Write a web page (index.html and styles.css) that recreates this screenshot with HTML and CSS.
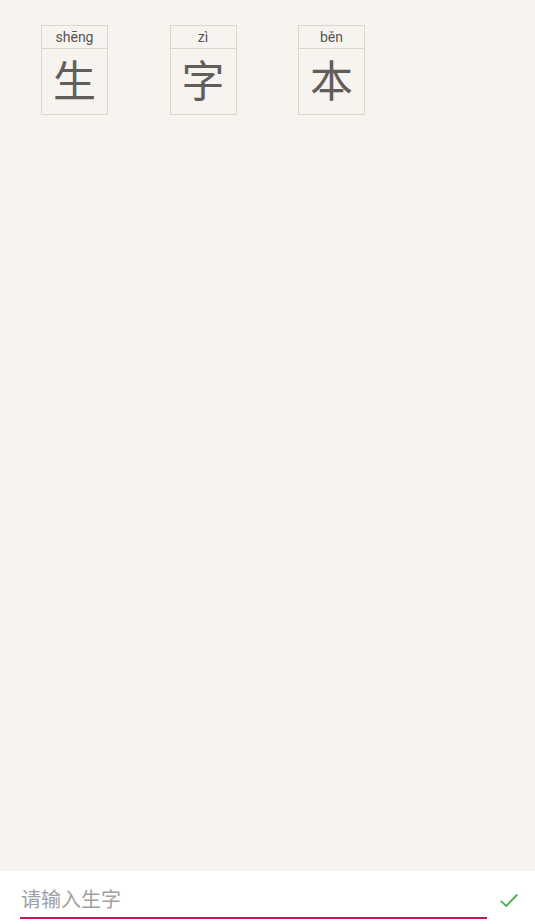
FILE: index.html
```html
<!DOCTYPE html>
<html lang="zh">
<head>
<meta charset="utf-8">
<link rel="stylesheet" href="styles.css">
</head>
<body>
<div class="app">
  <main class="cards">
    <div class="card"><div class="py">shēng</div><div class="hz">生</div></div>
    <div class="card"><div class="py">zì</div><div class="hz">字</div></div>
    <div class="card"><div class="py">běn</div><div class="hz">本</div></div>
  </main>
  <footer class="bar">
    <div class="field"><span class="ph">请输入生字</span></div>
    <svg class="check" viewBox="0 0 24 24" width="22" height="22"><path d="M3 13 L9 18.5 L21 6" fill="none" stroke="#4caf50" stroke-width="2"/></svg>
  </footer>
</div>
</body>
</html>
```
FILE: styles.css
```css
html, body { margin: 0; padding: 0; }
body { background: #f7f3ee; font-family: Roboto, "Noto Sans CJK SC", sans-serif; }
.app { width: 535px; height: 924px; display: flex; flex-direction: column; overflow: hidden; }
.cards { flex: 1; display: flex; align-items: flex-start; gap: 61.5px; padding: 25px 0 0 41px; }
.card { width: 65px; border: 1px solid #dcd6cf; display: flex; flex-direction: column; }
.py { height: 22px; border-bottom: 1px solid #dcd6cf; font-size: 14px; color: #555; text-align: center; line-height: 23px; }
.hz { height: 65px; font-family: "Noto Sans CJK SC", sans-serif; font-size: 43px; color: #615e5a; text-align: center; line-height: 58px; }
.bar { height: 53px; background: #fff; display: flex; align-items: flex-start; }
.field { margin-left: 20px; width: 467px; height: 48px; border-bottom: 2px solid #c2185b; box-sizing: border-box; display: flex; align-items: center; padding-top: 8px; }
.ph { font-family: "Noto Sans CJK SC", sans-serif; font-size: 20px; color: #a0a0a0; padding-left: 1px; }
.check { margin: 18px 0 0 11px; }
```
